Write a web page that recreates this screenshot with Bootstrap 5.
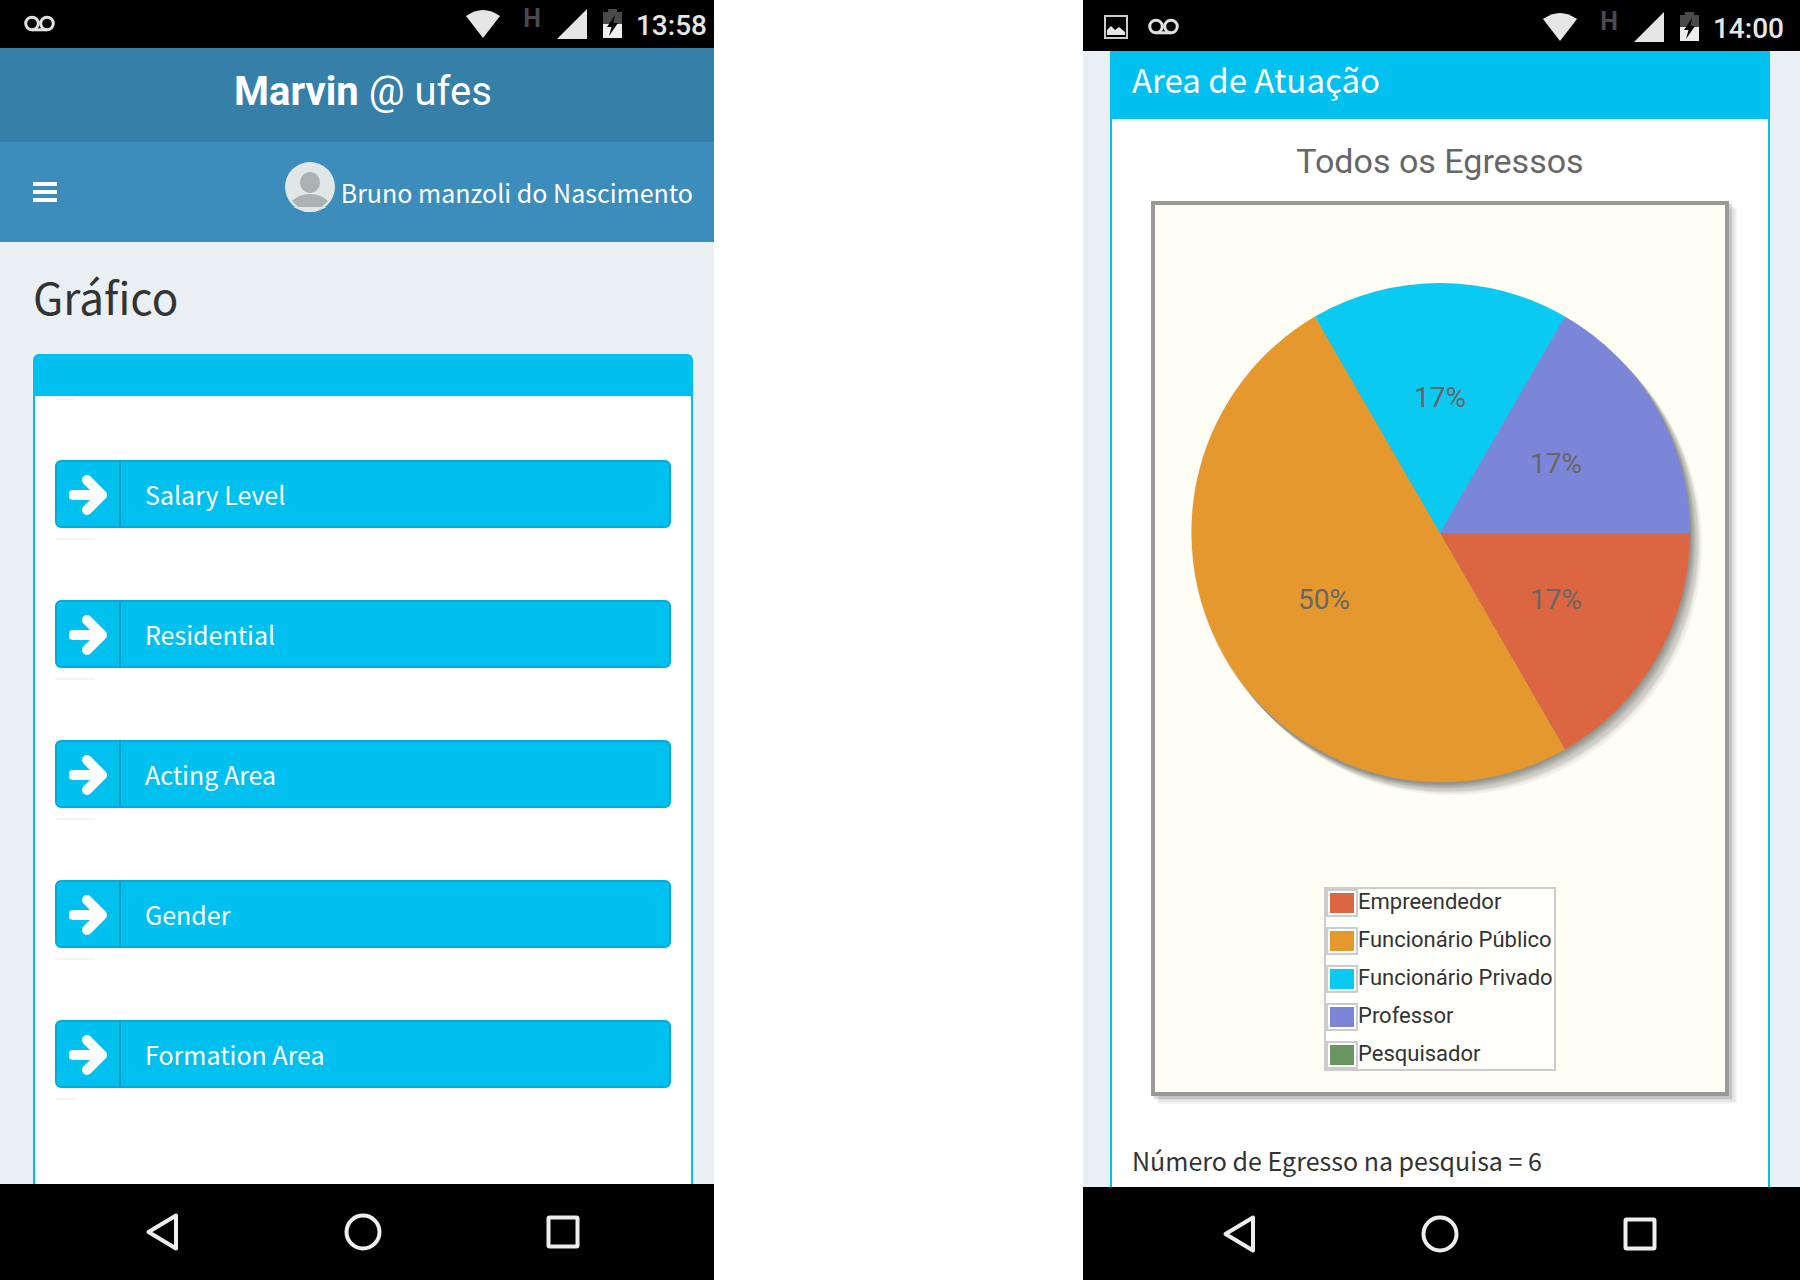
<!DOCTYPE html>
<html lang="pt-BR">
<head>
<meta charset="utf-8">
<meta name="viewport" content="width=device-width, initial-scale=1">
<title>Marvin @ ufes</title>
<link href="https://cdn.jsdelivr.net/npm/bootstrap@5.3.0/dist/css/bootstrap.min.css" rel="stylesheet">
<style>
  body { background: #fff; color: #333; font-family: "Noto Sans CJK SC", "Noto Sans", sans-serif; font-size: 25px; line-height: 36px; }
  .screens { display: grid; grid-template-columns: 714fr 369fr 717fr; }
  .phone { background: #e9eff3; min-width: 0; }
  .phone-right { grid-column: 3; }
  .roboto { font-family: Roboto, sans-serif; }
  svg { display: block; flex: none; }

  .status { background: #000; color: #e6e6e6; height: 48px; padding: 9px 7px 0 24px; }
  .status .net { color: #4a4a4a; font-size: 25px; line-height: 20px; margin-left: 23px; font-weight: 700; }
  .status .time { font-size: 28px; line-height: 34px; margin-left: 14px; font-weight: 500; }
  .status .sig { margin-left: 16px; }
  .phone-right .status { height: 51px; padding: 12px 16px 0 21px; }
  .photo { margin-right: 20px; }

  .brand { background: #367fa9; height: 94px; font-size: 40px; line-height: 88px; padding-left: 12px; }
  .topnav { background: #3c8dbc; height: 100px; padding: 0 21px 0 33px; }
  .user { color: #fff; text-decoration: none; gap: 6px; }
  .avatar { margin-bottom: 10px; }

  .page-title { font-size: 44px; line-height: 64px; font-weight: 400; padding: 22px 0 26px; margin: 0; }
  .page { padding: 0 21px 0 33px; }
  .panel { background: #fff; border: 2px solid #00c0ef; border-bottom: 0; border-radius: 6px 6px 0 0; }
  .panel-top { background: #00c0ef; height: 40px; }
  .panel-list { padding: 2px 20px 0; }
  .rule { background: #f4f4f4; height: 2px; width: 40px; margin-bottom: 60px; }
  .rule-short { width: 20px; }
  .btn-social { --bs-btn-color: #fff; --bs-btn-bg: #00c0ef; --bs-btn-border-color: #00acd6; --bs-btn-hover-color: #fff; --bs-btn-hover-bg: #00acd6; --bs-btn-hover-border-color: #00acd6;
    border-width: 2px; border-radius: 6px; height: 68px; padding: 0; font-size: 25px; line-height: 64px; margin-bottom: 10px; }
  .btn-social .arrow { width: 64px; border-right: 2px solid #009abf; margin-right: 24px; padding-top: 2px; }

  .page-right { padding: 0 30px 0 27px; }
  .phone-right .panel { border-top: 0; border-radius: 0; }
  .panel-head { background: #00c0ef; color: #fff; font-size: 33px; line-height: 40px; padding: 8px 20px 20px; margin: 0; font-weight: 400; }
  .chart-title { color: #666; font-size: 34px; line-height: 40px; padding: 22px 0 20px; margin: 0; font-weight: 400; }
  .chart { background: #fefef5; border: 4px solid #999; box-shadow: 3px 3px 1px rgba(0,0,0,.14), 7px 7px 2px rgba(0,0,0,.1); margin: 0 39px; padding-bottom: 21px; }
  .chart svg { width: 100%; height: auto; }
  .legend-box { width: 232px; border: 2px solid #ccc; background: #fffffb; gap: 10px; font-size: 22px; line-height: 26px; }
  .swatch { width: 32px; height: 28px; border: 2px solid #ccc; padding: 2px; background: #fff; }
  .swatch i { display: block; height: 20px; }
  .total { padding: 46px 20px 6px; margin: 0; }

  .softkeys { background: #000; height: 96px; gap: 160px; padding-left: 12px; }
  .phone-right .softkeys { height: 93px; padding: 0 4px 0 0; }
  .softkeys button { background: none; border: 0; padding: 0; }
  .plain { background: none; border: 0; padding: 0; }
</style>
<script src="https://cdn.jsdelivr.net/npm/bootstrap@5.3.0/dist/js/bootstrap.bundle.min.js"></script>
</head>
<body>
<svg width="0" height="0" class="position-absolute" aria-hidden="true">
  <symbol id="voicemail" viewBox="0 0 31 30"><g fill="none" stroke="#e0e0e0" stroke-width="3"><circle cx="8" cy="14.500" r="6.300"/><circle cx="23" cy="14.500" r="6.300"/><path d="M8 20.800H23"/></g></symbol>
  <symbol id="wifi" viewBox="0 0 34 30"><path fill="#e6e6e6" d="M0 7Q17-5 34 7L17 29Z"/></symbol>
  <symbol id="signal" viewBox="0 0 30 30"><path fill="#e6e6e6" d="M30 0V30H0Z"/></symbol>
  <symbol id="battery" viewBox="0 0 19 30"><path fill="#4a4a4a" d="M5 0H14V3H19V16H0V3H5Z"/><path fill="#eee" d="M0 15H19V29H0Z"/><path fill="#000" d="M12 6L4 18H8.500L6 27L15 14H10.500Z"/></symbol>
  <symbol id="arrow" viewBox="0 0 38 40"><path d="M4 20H30M18 5L33 20L18 35" fill="none" stroke="#fff" stroke-width="10" stroke-linecap="round" stroke-linejoin="round"/></symbol>
  <symbol id="back" viewBox="0 0 40 40"><path d="M33 3.500V36.500L5.500 20Z" fill="none" stroke="#eee" stroke-width="4" stroke-linejoin="round"/></symbol>
  <symbol id="home" viewBox="0 0 40 40"><circle cx="20" cy="20" r="16.500" fill="none" stroke="#eee" stroke-width="4"/></symbol>
  <symbol id="recent" viewBox="0 0 40 40"><rect x="5.500" y="5.500" width="29" height="29" rx="1" fill="none" stroke="#eee" stroke-width="4"/></symbol>
</svg>

<div class="screens min-vh-100">
  <section class="phone d-flex flex-column">
    <div class="status roboto d-flex align-items-start">
      <svg width="31" height="30"><use href="#voicemail"/></svg>
      <svg class="ms-auto" width="34" height="30"><use href="#wifi"/></svg>
      <span class="net">H</span>
      <svg class="sig" width="30" height="30"><use href="#signal"/></svg>
      <svg class="sig" width="19" height="30"><use href="#battery"/></svg>
      <span class="time">13:58</span>
    </div>
    <header>
      <div class="brand roboto text-white text-center"><b>Marvin</b> @ ufes</div>
      <nav class="topnav d-flex align-items-center justify-content-between">
        <button class="plain" type="button" aria-label="Menu">
          <svg width="24" height="20" viewBox="0 0 24 20"><path fill="#fff" d="M0 0H24V4H0ZM0 8H24V12H0ZM0 16H24V20H0Z"/></svg>
        </button>
        <a class="user d-flex align-items-center" href="#">
          <svg class="avatar" width="50" height="50" viewBox="0 0 50 50"><circle cx="25" cy="25" r="25" fill="#e1e6e6"/><ellipse cx="25" cy="20.500" rx="10" ry="10.500" fill="#aab2b3"/><path fill="#aab2b3" d="M7 39Q14 32 25 32T43 39L37 45H13Z"/><path fill="#e1e6e6" d="M8 45H42L30 50H20Z"/></svg>
          <span>Bruno manzoli do Nascimento</span>
        </a>
      </nav>
    </header>
    <main class="page d-flex flex-column flex-grow-1">
      <h1 class="page-title">Gráfico</h1>
      <div class="panel flex-grow-1">
        <div class="panel-top"></div>
        <div class="panel-list">
          <div class="rule rule-short"></div>
          <a class="btn btn-social d-flex align-items-center" href="#"><span class="arrow h-100 d-flex align-items-center justify-content-center"><svg width="38" height="40"><use href="#arrow"/></svg></span>Salary Level</a>
          <div class="rule"></div>
          <a class="btn btn-social d-flex align-items-center" href="#"><span class="arrow h-100 d-flex align-items-center justify-content-center"><svg width="38" height="40"><use href="#arrow"/></svg></span>Residential</a>
          <div class="rule"></div>
          <a class="btn btn-social d-flex align-items-center" href="#"><span class="arrow h-100 d-flex align-items-center justify-content-center"><svg width="38" height="40"><use href="#arrow"/></svg></span>Acting Area</a>
          <div class="rule"></div>
          <a class="btn btn-social d-flex align-items-center" href="#"><span class="arrow h-100 d-flex align-items-center justify-content-center"><svg width="38" height="40"><use href="#arrow"/></svg></span>Gender</a>
          <div class="rule"></div>
          <a class="btn btn-social d-flex align-items-center" href="#"><span class="arrow h-100 d-flex align-items-center justify-content-center"><svg width="38" height="40"><use href="#arrow"/></svg></span>Formation Area</a>
          <div class="rule rule-short"></div>
        </div>
      </div>
    </main>
    <div class="softkeys d-flex align-items-center justify-content-center">
      <button type="button" aria-label="Voltar"><svg width="40" height="40"><use href="#back"/></svg></button>
      <button type="button" aria-label="Início"><svg width="40" height="40"><use href="#home"/></svg></button>
      <button type="button" aria-label="Recentes"><svg width="40" height="40"><use href="#recent"/></svg></button>
    </div>
  </section>

  <section class="phone phone-right d-flex flex-column">
    <div class="status roboto d-flex align-items-start">
      <svg class="photo" width="24" height="30" viewBox="0 0 24 30"><rect x="1" y="4" width="22" height="22" fill="none" stroke="#ccc" stroke-width="2"/><path fill="#e6e6e6" d="M3 23V18L7 14L11 18L15 15L21 20V23Z"/></svg>
      <svg width="31" height="30"><use href="#voicemail"/></svg>
      <svg class="ms-auto" width="34" height="30"><use href="#wifi"/></svg>
      <span class="net">H</span>
      <svg class="sig" width="30" height="30"><use href="#signal"/></svg>
      <svg class="sig" width="19" height="30"><use href="#battery"/></svg>
      <span class="time">14:00</span>
    </div>
    <main class="page-right d-flex flex-column flex-grow-1">
      <div class="panel flex-grow-1">
        <h2 class="panel-head">Area de Atuação</h2>
        <h3 class="chart-title roboto text-center">Todos os Egressos</h3>
        <div class="chart roboto">
          <svg viewBox="0 0 570 682" role="img" aria-label="Todos os Egressos">
            <g fill="#000" fill-opacity=".05">
              <circle cx="286" cy="329" r="250"/><circle cx="287" cy="330" r="250"/><circle cx="288" cy="331" r="250"/><circle cx="289" cy="332" r="250"/><circle cx="290" cy="333" r="250"/><circle cx="291" cy="334" r="250"/><circle cx="293" cy="336" r="250"/><circle cx="294" cy="337" r="250"/><circle cx="295" cy="338" r="250"/><circle cx="297" cy="340" r="250"/>
            </g>
            <path fill="#dc6641" d="M285 328H535A250 250 0 0 1 410 544.500Z"/>
            <path fill="#e5982e" d="M285 328L410 544.500A250 250 0 0 1 160 111.500Z"/>
            <path fill="#0bcaf1" d="M285 328L160 111.500A250 250 0 0 1 410 111.500Z"/>
            <path fill="#7b86d9" d="M285 328L410 111.500A250 250 0 0 1 535 328Z"/>
            <g fill="#666" font-size="28" text-anchor="middle">
              <text x="285" y="202">17%</text>
              <text x="401" y="268">17%</text>
              <text x="401" y="404">17%</text>
              <text x="169" y="404">50%</text>
            </g>
          </svg>
          <ul class="legend-box list-unstyled d-flex flex-column mx-auto mb-0 text-nowrap">
            <li class="d-flex"><span class="swatch"><i style="background:#dc6641"></i></span>Empreendedor</li>
            <li class="d-flex"><span class="swatch"><i style="background:#e5982e"></i></span>Funcionário Público</li>
            <li class="d-flex"><span class="swatch"><i style="background:#0bcaf1"></i></span>Funcionário Privado</li>
            <li class="d-flex"><span class="swatch"><i style="background:#7b86d9"></i></span>Professor</li>
            <li class="d-flex"><span class="swatch"><i style="background:#6a975f"></i></span>Pesquisador</li>
          </ul>
        </div>
        <p class="total">Número de Egresso na pesquisa = 6</p>
      </div>
    </main>
    <div class="softkeys d-flex align-items-center justify-content-center">
      <button type="button" aria-label="Voltar"><svg width="40" height="40"><use href="#back"/></svg></button>
      <button type="button" aria-label="Início"><svg width="40" height="40"><use href="#home"/></svg></button>
      <button type="button" aria-label="Recentes"><svg width="40" height="40"><use href="#recent"/></svg></button>
    </div>
  </section>
</div>
</body>
</html>
